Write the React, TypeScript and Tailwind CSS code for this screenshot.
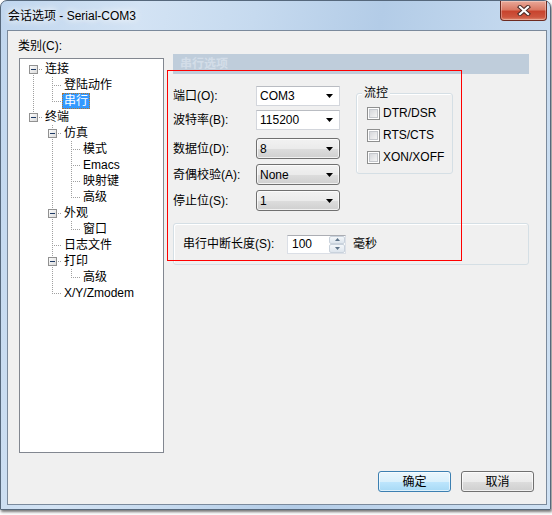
import React from 'react';

type Node = { label: string; level: number; exp?: boolean; sel?: boolean };

const TREE: Node[] = [
  { label: '连接', level: 0, exp: true },
  { label: '登陆动作', level: 1 },
  { label: '串行', level: 1, sel: true },
  { label: '终端', level: 0, exp: true },
  { label: '仿真', level: 1, exp: true },
  { label: '模式', level: 2 },
  { label: 'Emacs', level: 2 },
  { label: '映射键', level: 2 },
  { label: '高级', level: 2 },
  { label: '外观', level: 1, exp: true },
  { label: '窗口', level: 2 },
  { label: '日志文件', level: 1 },
  { label: '打印', level: 1, exp: true },
  { label: '高级', level: 2 },
  { label: 'X/Y/Zmodem', level: 1 },
];

const INDENT = ['pl-[23px]', 'pl-[42px]', 'pl-[61px]'];
const xc = (l: number) => 13 + 19 * l;

function hasNext(i: number) {
  const l = TREE[i].level;
  for (let j = i + 1; j < TREE.length; j++) {
    if (TREE[j].level < l) return false;
    if (TREE[j].level === l) return true;
  }
  return false;
}

function ancestorOpen(i: number, a: number) {
  for (let j = i - 1; j >= 0; j--) {
    if (TREE[j].level === a) return hasNext(j);
  }
  return false;
}

function TreeLines() {
  const lines: React.ReactNode[] = [];
  const boxes: React.ReactNode[] = [];
  TREE.forEach((n, i) => {
    const top = 2 + 16 * i;
    const cy = top + 8;
    const x = xc(n.level) + 0.5;
    if (i > 0) lines.push(<line key={`u${i}`} x1={x} y1={top} x2={x} y2={cy} />);
    if (hasNext(i)) lines.push(<line key={`d${i}`} x1={x} y1={cy} x2={x} y2={top + 16} />);
    for (let a = 0; a < n.level; a++) {
      if (ancestorOpen(i, a)) {
        const ax = xc(a) + 0.5;
        lines.push(<line key={`a${i}-${a}`} x1={ax} y1={top} x2={ax} y2={top + 16} />);
      }
    }
    lines.push(<line key={`h${i}`} x1={xc(n.level)} y1={cy + 0.5} x2={23 + 19 * n.level - 1} y2={cy + 0.5} />);
    if (n.exp) {
      const bx = xc(n.level) - 4;
      boxes.push(
        <g key={`b${i}`}>
          <rect x={bx + 0.5} y={cy - 4 + 0.5} width={8} height={8} fill="url(#bx)" stroke="#919191" />
          <line x1={bx + 2} y1={cy + 0.5} x2={bx + 7} y2={cy + 0.5} stroke="#1e3a64" />
        </g>
      );
    }
  });
  return (
    <svg className="absolute left-0 top-0 pointer-events-none" width={143} height={393}>
      <defs>
        <linearGradient id="bx" x1="0" y1="0" x2="1" y2="1">
          <stop offset="0" stopColor="#ffffff" />
          <stop offset="1" stopColor="#d8d8d8" />
        </linearGradient>
      </defs>
      <g stroke="#a0a0a0" strokeDasharray="1 1">{lines}</g>
      {boxes}
    </svg>
  );
}

function Arrow() {
  return (
    <svg width="7" height="4" className="ml-auto mr-[6px]">
      <polygon points="0,0 7,0 3.5,4" fill="#000" />
    </svg>
  );
}

function WhiteCombo({ value }: { value: string }) {
  return (
    <div className="w-[84px] h-[20px] flex items-center bg-white border border-[#d3d6dc] border-t-[#b9bcc2] pl-[3px]">
      <span>{value}</span>
      <Arrow />
    </div>
  );
}

function GrayCombo({ value }: { value: string }) {
  return (
    <div className="w-[84px] h-[21px] flex items-center rounded-[3px] border border-[#707070] pl-[3px] bg-[linear-gradient(to_bottom,#f2f2f2_0%,#ebebeb_50%,#dddddd_51%,#cfcfcf_100%)] shadow-[inset_0_0_0_1px_rgba(255,255,255,0.7)]">
      <span>{value}</span>
      <Arrow />
    </div>
  );
}

function Row({ label, children, className }: { label: string; children: React.ReactNode; className: string }) {
  return (
    <div className={`flex items-center ${className}`}>
      <span className="w-[83px]">{label}</span>
      {children}
    </div>
  );
}

function Check({ label }: { label: string }) {
  return (
    <div className="h-[22px] flex items-center">
      <div className="w-[13px] h-[13px] border border-[#8e8f8f] bg-white p-[1px]">
        <div className="w-full h-full border border-[#c4c7cc] bg-[linear-gradient(135deg,#d6d8dc_0%,#f4f4f4_100%)]" />
      </div>
      <span className="ml-[3px]">{label}</span>
    </div>
  );
}

function Button({ label, primary }: { label: string; primary?: boolean }) {
  return (
    <div
      className={
        primary
          ? 'w-[73px] h-[21px] flex items-center justify-center rounded-[3px] border border-[#3c7fb1] bg-[linear-gradient(to_bottom,#eaf6fd_0%,#d9f0fc_50%,#bee6fd_51%,#a7d9f5_100%)] shadow-[inset_0_0_0_1px_rgba(255,255,255,0.6)]'
          : 'w-[73px] h-[21px] flex items-center justify-center rounded-[3px] border border-[#707070] bg-[linear-gradient(to_bottom,#f2f2f2_0%,#ebebeb_50%,#dddddd_51%,#cfcfcf_100%)] shadow-[inset_0_0_0_1px_rgba(255,255,255,0.7)]'
      }
    >
      {label}
    </div>
  );
}

export default function App() {
  return (
    <div className="w-[552px] h-[515px] bg-white overflow-hidden text-[12px] text-black font-['Liberation_Sans','Noto_Sans_CJK_SC',sans-serif]">
      <div className="w-[551px] h-[510px] flex flex-col rounded-t-[7px] border border-[#56687c] pl-[6px] pr-[3px] pb-[4px] shadow-[1px_2px_3px_rgba(0,0,0,0.55)] bg-[linear-gradient(100deg,#c0d6ee_0%,#d3e3f4_22%,#c6daef_40%,#b3cce7_60%,#c3d8ee_80%,#cfe1f3_100%)]">
        {/* title bar */}
        <div className="h-[29px] flex">
          <span className="ml-[1px] mt-[8px] leading-[14px] [text-shadow:0_0_6px_#fff,0_0_10px_#fff]">会话选项 - Serial-COM3</span>
          <div className="ml-auto w-[47px] h-[20px] flex items-center justify-center rounded-b-[4px] border border-t-0 border-[#6d2b21] bg-[linear-gradient(to_bottom,#e9a999_0%,#da7a65_45%,#c8442e_55%,#cd563f_85%,#e18a70_100%)] shadow-[inset_0_0_0_1px_rgba(255,255,255,0.3)]">
            <svg width="14" height="11" viewBox="0 0 14 11">
              <path d="M3 2 L11 9 M11 2 L3 9" stroke="#4a2a26" strokeWidth="4.2" strokeLinecap="square" />
              <path d="M3 2 L11 9 M11 2 L3 9" stroke="#ffffff" strokeWidth="2.2" strokeLinecap="square" />
            </svg>
          </div>
        </div>

        {/* client area */}
        <div className="flex-1 relative flex flex-col border border-[#7b8a9c] bg-[#f0f0f0]">
          <div className="flex">
            {/* category tree */}
            <div className="ml-[11px] flex flex-col">
              <div className="h-[27px] pt-[8px] leading-[14px] -ml-[1px]">类别(C):</div>
              <div className="relative w-[145px] h-[395px] border border-[#828790] bg-white pt-[2px]">
                <TreeLines />
                {TREE.map((n, i) => (
                  <div key={i} className={`h-[16px] flex ${INDENT[n.level]}`}>
                    <span
                      className={
                        n.sel
                          ? 'h-[16px] leading-[14px] px-[1px] border border-dotted border-[#b5762c] bg-[#3399ff] text-white'
                          : 'h-[16px] leading-[14px] px-[1px] border border-transparent'
                      }
                    >
                      {n.label}
                    </span>
                  </div>
                ))}
              </div>
            </div>

            {/* serial options panel */}
            <div className="ml-[9px] w-[356px] flex flex-col">
              <div className="mt-[23px] h-[20px] bg-[#bfcddb] pl-[7px] leading-[20px] font-bold text-[#d3dde8]">串行选项</div>
              <div className="flex">
                <div className="flex flex-col w-[167px]">
                  <Row label="端口(O):" className="mt-[12px]">
                    <WhiteCombo value="COM3" />
                  </Row>
                  <Row label="波特率(B):" className="mt-[4px]">
                    <WhiteCombo value="115200" />
                  </Row>
                  <Row label="数据位(D):" className="mt-[8px]">
                    <GrayCombo value="8" />
                  </Row>
                  <Row label="奇偶校验(A):" className="mt-[5px]">
                    <GrayCombo value="None" />
                  </Row>
                  <Row label="停止位(S):" className="mt-[5px]">
                    <GrayCombo value="1" />
                  </Row>
                </div>
                <div className="relative ml-[16px] mt-[19px] w-[97px] h-[81px] rounded-[3px] border border-[#d5dfe5] shadow-[inset_1px_1px_0_#fff] pl-[10px] pt-[8px]">
                  <span className="absolute left-[5px] -top-[9px] px-[2px] bg-[#f0f0f0] leading-[16px]">流控</span>
                  <Check label="DTR/DSR" />
                  <Check label="RTS/CTS" />
                  <Check label="XON/XOFF" />
                </div>
              </div>
              <div className="mt-[12px] h-[42px] flex items-center rounded-[3px] border border-[#d5dfe5] shadow-[inset_1px_1px_0_#fff] pl-[9px]">
                <span className="w-[104px]">串行中断长度(S):</span>
                <div className="w-[59px] h-[19px] flex bg-white border border-[#dbdfe6] border-t-[#abadb3]">
                  <span className="flex-1 pl-[4px] leading-[17px]">100</span>
                  <div className="w-[16px] flex flex-col">
                    <div className="flex-1 flex items-center justify-center border border-[#c9d2dc] rounded-[2px] bg-[linear-gradient(to_bottom,#f4f7fa,#dde5ed)]">
                      <svg width="5" height="3"><polygon points="0,3 5,3 2.5,0" fill="#5d7388" /></svg>
                    </div>
                    <div className="flex-1 flex items-center justify-center border border-[#c9d2dc] rounded-[2px] bg-[linear-gradient(to_bottom,#f4f7fa,#dde5ed)]">
                      <svg width="5" height="3"><polygon points="0,0 5,0 2.5,3" fill="#5d7388" /></svg>
                    </div>
                  </div>
                </div>
                <span className="ml-[7px]">毫秒</span>
              </div>
            </div>
          </div>

          <div className="mt-auto flex justify-end gap-[10px] pr-[12px] pb-[12px]">
            <Button label="确定" primary />
            <Button label="取消" />
          </div>

          {/* red annotation */}
          <div className="absolute left-[159px] top-[39px] w-[295px] h-[191px] border border-[#ff0000] pointer-events-none" />
        </div>
      </div>
    </div>
  );
}
